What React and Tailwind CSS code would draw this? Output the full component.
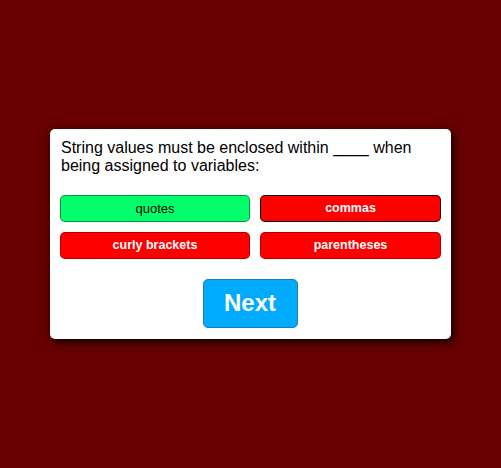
const answers = [
    { text: "quotes", cls: "bg-[#00ff6a] text-black border-black/40 text-[13px] font-normal" },
    { text: "commas", cls: "bg-[#ff0000] text-white border-black/90 text-[12.5px] font-bold" },
    { text: "curly brackets", cls: "bg-[#ff0000] text-white border-black/30 text-[12.5px] font-bold" },
    { text: "parentheses", cls: "bg-[#ff0000] text-white border-black/30 text-[12.5px] font-bold" },
];

export default function App() {
    return (
        <div className="min-h-[468px] w-full bg-[#680000] flex items-center justify-center font-['Liberation_Sans',Arial,sans-serif]">
            {/* CARD */}
            <div className="w-[401px] h-[210px] bg-white rounded-[5px] px-[10px] pt-[10px] shadow-[2px_3px_10px_rgba(0,0,0,0.95)]">
                <h2 className="text-[16px] leading-[18.4px] text-black pl-[1px]">
                    String values must be enclosed within ____ when being assigned to variables:
                </h2>

                {/* Answer buttons */}
                <div className="grid grid-cols-[190px_181px] gap-[10px] mt-[19px]">
                    {answers.map((a) => (
                        <button
                            key={a.text}
                            className={`h-[27px] rounded-[5px] border ${a.cls}`}
                        >
                            {a.text}
                        </button>
                    ))}
                </div>

                {/* Next */}
                <div className="flex justify-center mt-[20px]">
                    <button className="w-[95px] h-[49px] ml-[-1px] rounded-[5px] border border-[#1a7fb8] bg-[#00aaff] text-white text-[24px] font-bold">
                        Next
                    </button>
                </div>
            </div>
        </div>
    );
}
